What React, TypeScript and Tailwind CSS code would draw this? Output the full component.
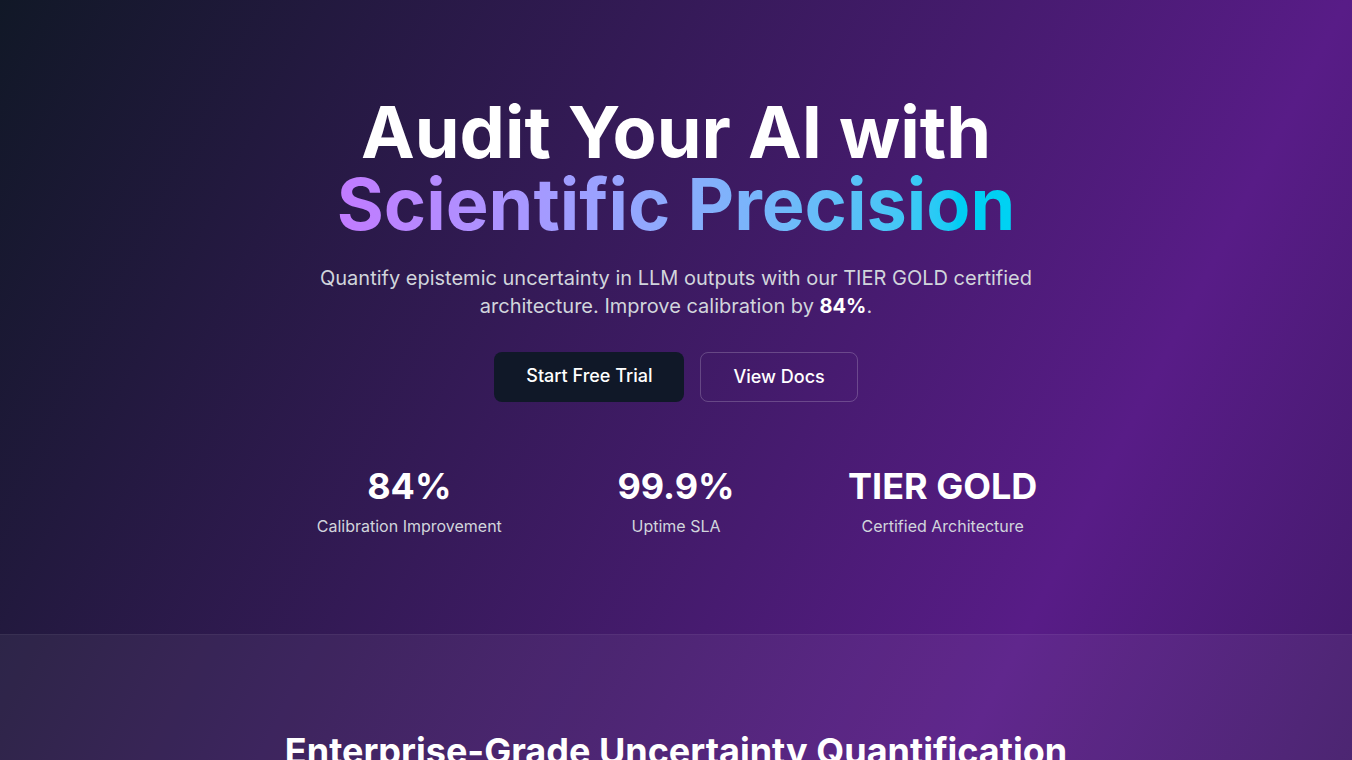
export default function App() {
  const stats = [
    { value: "84%", label: "Calibration Improvement" },
    { value: "99.9%", label: "Uptime SLA" },
    { value: "TIER GOLD", label: "Certified Architecture" },
  ];

  return (
    // page gradient: gray-900 -> purple-900 -> gray-900, stops in px so it runs long
    <div className="min-h-screen font-['Inter',sans-serif] text-white bg-[linear-gradient(117deg,#111827_0px,#581c87_1200px,#111827_2400px)]">
      {/* Hero */}
      <section className="px-6 pt-24 pb-24 text-center">
        <div className="max-w-5xl mx-auto">
          <h1 className="text-7xl font-bold mb-6">
            Audit Your AI with
            <br />
            <span className="bg-gradient-to-r from-purple-400 to-cyan-400 bg-clip-text text-transparent">
              Scientific Precision
            </span>
          </h1>
          <p className="text-xl text-gray-300 max-w-3xl mx-auto">
            Quantify epistemic uncertainty in LLM outputs with our TIER GOLD certified architecture. Improve calibration by{" "}
            <span className="font-bold text-white">84%</span>.
          </p>

          <div className="flex justify-center gap-4 mt-8">
            <a href="#trial" className="bg-gray-900 text-white px-8 py-2.5 rounded-lg text-lg font-medium">
              Start Free Trial
            </a>
            <a href="#docs" className="border border-white/20 text-white px-8 py-2.5 rounded-lg text-lg font-medium">
              View Docs
            </a>
          </div>

          <div className="grid grid-cols-3 gap-8 max-w-3xl mx-auto mt-16">
            {stats.map((s) => (
              <div key={s.label}>
                <div className="text-4xl font-bold">{s.value}</div>
                <div className="text-gray-300 mt-2">{s.label}</div>
              </div>
            ))}
          </div>
        </div>
      </section>

      {/* Features */}
      <section className="bg-white/5 border-t border-white/5 px-6 py-24">
        <div className="max-w-6xl mx-auto text-center">
          <h2 className="text-4xl font-bold mb-4">Enterprise-Grade Uncertainty Quantification</h2>
          <p className="text-gray-300 text-lg max-w-2xl mx-auto">
            Measure, calibrate and monitor the confidence of every model response.
          </p>
        </div>
      </section>
    </div>
  );
}
